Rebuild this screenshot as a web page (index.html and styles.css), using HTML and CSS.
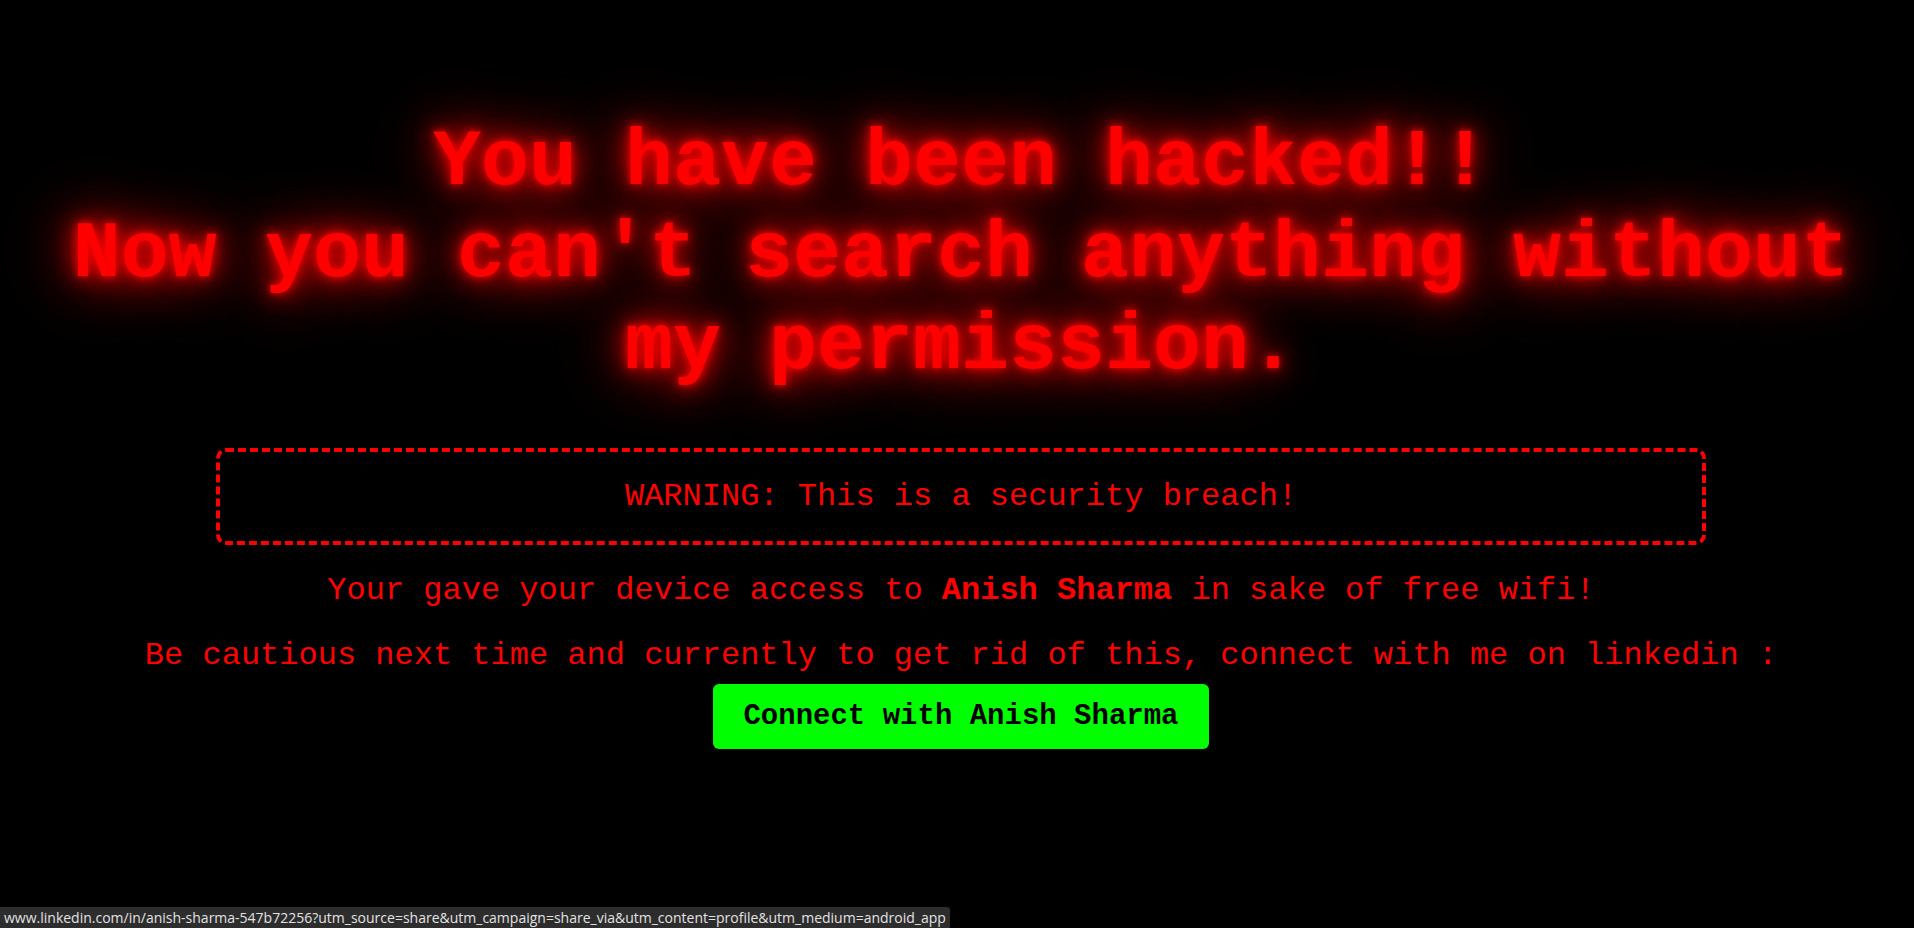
FILE: index.html
```html
<!DOCTYPE html>
<html lang="en">
<head>
<meta charset="utf-8">
<title>Hacked</title>
<link rel="stylesheet" href="styles.css">
</head>
<body>
<main class="page">
  <h1 class="title">You have been hacked!!<br>Now you can't search anything without my permission.</h1>
  <div class="warning">WARNING: This is a security breach!</div>
  <p class="msg">Your gave your device access to <strong>Anish Sharma</strong> in sake of free wifi!</p>
  <p class="msg msg-last">Be cautious next time and currently to get rid of this, connect with me on linkedin :</p>
  <a class="btn" href="https://www.linkedin.com/in/anish-sharma-547b72256?utm_source=share&amp;utm_campaign=share_via&amp;utm_content=profile&amp;utm_medium=android_app">Connect with Anish Sharma</a>
</main>
<div class="status">www.linkedin.com/in/anish-sharma-547b72256?utm_source=share&amp;utm_campaign=share_via&amp;utm_content=profile&amp;utm_medium=android_app</div>
</body>
</html>
```
FILE: styles.css
```css
html, body {
  margin: 0;
  padding: 0;
  background: #000;
  height: 100%;
  overflow: hidden;
}
body {
  font-family: "Liberation Mono", "Courier New", monospace;
  color: #ff0000;
}
.page {
  display: flex;
  flex-direction: column;
  align-items: center;
  text-align: center;
  padding: 117px 0 0 8px;
}
.title {
  margin: 0;
  font-size: 80px;
  line-height: 92px;
  font-weight: bold;
  color: #ff0000;
  text-shadow: 0 0 10px #ff0000, 0 0 25px #ff0000, 0 0 50px #e00000, 0 0 80px #a00000;
}
.warning {
  box-sizing: border-box;
  width: 1490px;
  height: 97px;
  margin-top: 55px;
  padding: 0 20px;
  border: 4px dashed #ff0000;
  border-radius: 10px;
  font-size: 32px;
  display: flex;
  align-items: center;
  justify-content: center;
}
.msg {
  margin: 27px 0 0;
  font-size: 32px;
}
.msg strong {
  font-weight: bold;
}
.msg-last {
  margin-top: 28px;
}
.btn {
  margin-top: 10px;
  display: inline-block;
  background: #00ff00;
  color: #000;
  font-family: "Liberation Mono", "Courier New", monospace;
  font-weight: bold;
  font-size: 29px;
  line-height: 33px;
  padding: 16px 30px;
  border-radius: 6px;
  text-decoration: none;
}
.status {
  position: fixed;
  left: 0;
  bottom: 0;
  height: 21px;
  line-height: 21px;
  padding: 0 4px;
  background: #2d2d2d;
  color: #e2e2e2;
  font-family: "Open Sans", "DejaVu Sans", sans-serif;
  font-size: 14px;
  border-top-right-radius: 3px;
  white-space: nowrap;
}
```
